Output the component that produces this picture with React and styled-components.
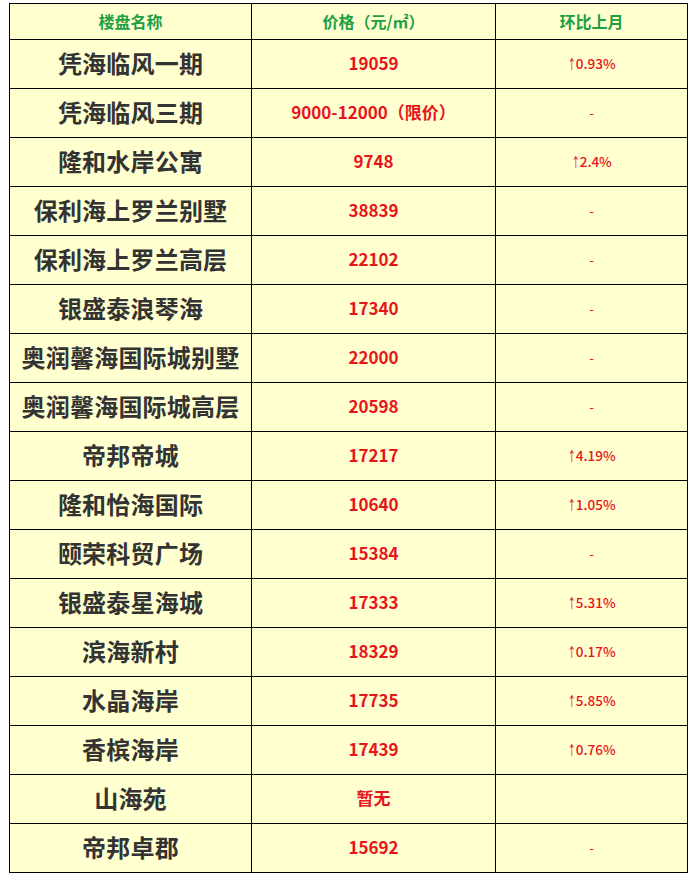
import React from 'react'
import styled, { createGlobalStyle } from 'styled-components'

const GlobalStyle = createGlobalStyle`
   body {
      margin: 0;
      background: #fff;
      font-family: "Noto Sans CJK SC", "Noto Sans", sans-serif;
   }
`

const Page = styled.div`
   padding: 3px 0 0 9px;
`

const Table = styled.table`
   border-collapse: collapse;
   table-layout: fixed;
   width: 678px;
   background: #ffffcf;
`

const HeadCell = styled.th`
   height: 34px;
   padding: 0 0 1px;
   border: 1px solid #000;
   color: #1f9e43;
   font-size: 16px;
   font-weight: 700;
   line-height: 1;
   text-align: center;
   vertical-align: middle;
`

const Cell = styled.td`
   height: 45px;
   padding: 0 0 3px;
   border: 1px solid #000;
   line-height: 1;
   text-align: center;
   vertical-align: middle;
`

const Name = styled.span`
   color: #333;
   font-size: 24px;
   font-weight: 700;
   letter-spacing: 0.2px;
`

const Price = styled.span`
   color: #e8141c;
   font-size: 17px;
   font-weight: 700;
`

const Change = styled.span`
   color: #e8141c;
   font-size: 13.5px;
   font-weight: ${props => (props.dash ? 400 : 500)};
`

// the arrow glyph of Noto is wide, squeeze it a bit
const Arrow = styled.span`
   display: inline-block;
   transform: scaleX(0.6);
   margin: 0 -3px 0 -2px;
`

const rows = [
   ['凭海临风一期', '19059', '0.93%'],
   ['凭海临风三期', '9000-12000（限价）', '-'],
   ['隆和水岸公寓', '9748', '2.4%'],
   ['保利海上罗兰别墅', '38839', '-'],
   ['保利海上罗兰高层', '22102', '-'],
   ['银盛泰浪琴海', '17340', '-'],
   ['奥润馨海国际城别墅', '22000', '-'],
   ['奥润馨海国际城高层', '20598', '-'],
   ['帝邦帝城', '17217', '4.19%'],
   ['隆和怡海国际', '10640', '1.05%'],
   ['颐荣科贸广场', '15384', '-'],
   ['银盛泰星海城', '17333', '5.31%'],
   ['滨海新村', '18329', '0.17%'],
   ['水晶海岸', '17735', '5.85%'],
   ['香槟海岸', '17439', '0.76%'],
   ['山海苑', '暂无', ''],
   ['帝邦卓郡', '15692', '-'],
]

function App() {
   return (
      <Page>
         <GlobalStyle />
         <Table>
            <colgroup>
               <col style={{ width: 242 }} />
               <col style={{ width: 244 }} />
               <col style={{ width: 192 }} />
            </colgroup>
            <thead>
               <tr>
                  <HeadCell>楼盘名称</HeadCell>
                  <HeadCell>价格（元/㎡）</HeadCell>
                  <HeadCell>环比上月</HeadCell>
               </tr>
            </thead>
            <tbody>
               {rows.map(([name, price, change]) => {
                  let up = change.endsWith('%')
                  return (
                     <tr key={name}>
                        <Cell><Name>{name}</Name></Cell>
                        <Cell><Price>{price}</Price></Cell>
                        <Cell>
                           <Change dash={!up}>
                              {up && <Arrow>↑</Arrow>}
                              {change}
                           </Change>
                        </Cell>
                     </tr>
                  )
               })}
            </tbody>
         </Table>
      </Page>
   )
}

export default App
